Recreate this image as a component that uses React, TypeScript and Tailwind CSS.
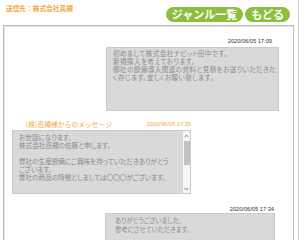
const jp = "font-['Noto_Sans_CJK_JP','Noto_Sans',sans-serif]";
const num = "font-['Liberation_Sans',Arial,sans-serif]";

const Chevron = ({ up }: { up?: boolean }) => (
  <svg width="5" height="4" viewBox="0 0 5 4" className="block">
    <path
      d={up ? "M0.5 3.2 L2.5 1 L4.5 3.2" : "M0.5 0.8 L2.5 3 L4.5 0.8"}
      fill="none"
      stroke="#777"
      strokeWidth="0.9"
    />
  </svg>
);

export default function App() {
  return (
    <div className={`w-[299px] h-[240px] overflow-hidden bg-white border-r border-[#d2d2d2] ${jp}`}>
      {/* Header */}
      <div className="flex justify-between items-start h-[25px]">
        <div className="pl-[6px] pt-[4px] text-[6.7px] leading-[8px] font-bold text-[#f5a640]">
          送信先：株式会社高槻
        </div>
        <div className="flex gap-[2px] pt-[7px] pr-[8px]">
          <button className="h-[15px] px-[6px] rounded-full bg-[#8dbf3e] text-white text-[11px] leading-[15px] font-bold">
            ジャンル一覧
          </button>
          <button className="h-[15px] px-[6px] rounded-full bg-[#8dbf3e] text-white text-[11px] leading-[15px] font-bold">
            もどる
          </button>
        </div>
      </div>

      {/* Message panel */}
      <div className="ml-[3px] w-[291px] h-[230px] border border-[#bdbdbd] shadow-[inset_1px_1px_0_#e4e4e4]">
        {/* Sent message 1 */}
        <div className="ml-auto mr-[14px] w-[173px] pt-[12px]">
          <div className={`text-right pr-[7px] text-[5.7px] leading-[6px] text-[#333] ${num}`}>
            2020/06/05 17:09
          </div>
          <div className="mt-[3px] h-[64px] bg-[#d9d9d9] border border-[#cacaca] pl-[6px] pr-[1px] pt-[2px] text-[6.6px] leading-[7.9px] tracking-[0.4px] text-[#8a8a8a] [font-feature-settings:'palt']">
            初めまして株式会社ナビット田中です。
            <br />
            新規購入を考えております。
            <br />
            御社の設備導入関連の資料と見積をお送りいただきた
            <br />
            く存じます。宜しくお願い致します。
          </div>
        </div>

        {/* Received message */}
        <div className="ml-[8px] w-[179px] mt-[9px]">
          <div className="flex justify-between items-end">
            <div className="pl-[14px] text-[6.8px] leading-[8px] text-[#f5a640]">
              (株)高槻様からのメッセージ
            </div>
            <div className={`text-[5.7px] leading-[6px] text-[#f5a640] mb-[1px] ${num}`}>
              2020/06/05 17:25
            </div>
          </div>
          <div className="mt-[2px] h-[64px] flex bg-[#d9d9d9] border border-[#cacaca]">
            <div className="flex-1 pl-[6px] pt-[3px] text-[6.6px] leading-[7.9px] text-[#8a8a8a] [font-feature-settings:'palt']">
              お世話になります。
              <br />
              株式会社高槻の佐藤と申します。
              <br />
              <br />
              弊社の生産設備にご興味を持っていただきありがとう
              <br />
              ございます。
              <br />
              弊社の商品の特徴としましては〇〇〇がございます。
            </div>
            <div className="w-[7px] flex flex-col items-center bg-[#f7f7f7]">
              <div className="pt-[3px]">
                <Chevron up />
              </div>
              <div className="mt-[3px] w-[6px] h-[24px] bg-[#c2c2c2]" />
              <div className="flex-1" />
              <div className="pb-[2px]">
                <Chevron />
              </div>
            </div>
          </div>
        </div>

        {/* Sent message 2 */}
        <div className="ml-auto mr-[18px] w-[170px] mt-[12px]">
          <div className={`text-right pr-[1px] text-[5.7px] leading-[6px] text-[#333] ${num}`}>
            2020/06/05 17:34
          </div>
          <div className="mt-[1px] h-[40px] bg-[#d9d9d9] border border-[#cacaca] pl-[9px] pt-[2px] text-[6.4px] leading-[9px] text-[#8a8a8a] [font-feature-settings:'palt']">
            ありがとうございました。
            <br />
            参考にさせていただきます。
          </div>
        </div>
      </div>
    </div>
  );
}
